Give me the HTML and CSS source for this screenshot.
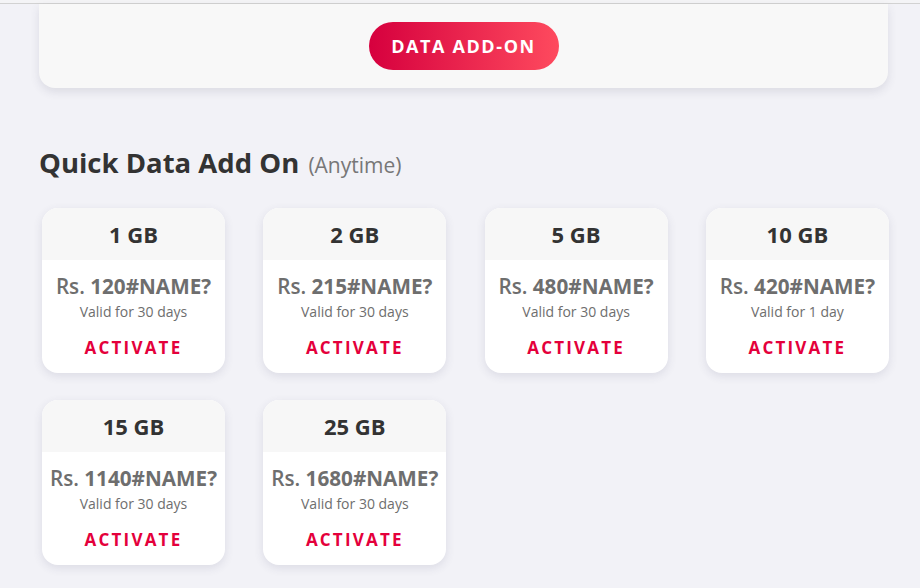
FILE: index.html
```html
<!DOCTYPE html>
<html>
<head>
<meta charset="utf-8">
<link rel="stylesheet" href="styles.css">
</head>
<body>
<div class="topline"></div>
<div class="page">
  <div class="hero">
    <button class="btn-grad">DATA ADD-ON</button>
  </div>
  <h2 class="title">Quick Data Add On <span class="sub">(Anytime)</span></h2>
  <div class="grid">
    <div class="card"><div class="card-head">1 GB</div><div class="card-body"><div class="price"><span class="rs">Rs.</span> 120#NAME?</div><div class="valid">Valid for 30 days</div><a class="act">ACTIVATE</a></div></div>
    <div class="card"><div class="card-head">2 GB</div><div class="card-body"><div class="price"><span class="rs">Rs.</span> 215#NAME?</div><div class="valid">Valid for 30 days</div><a class="act">ACTIVATE</a></div></div>
    <div class="card"><div class="card-head">5 GB</div><div class="card-body"><div class="price"><span class="rs">Rs.</span> 480#NAME?</div><div class="valid">Valid for 30 days</div><a class="act">ACTIVATE</a></div></div>
    <div class="card"><div class="card-head">10 GB</div><div class="card-body"><div class="price"><span class="rs">Rs.</span> 420#NAME?</div><div class="valid">Valid for 1 day</div><a class="act">ACTIVATE</a></div></div>
    <div class="card"><div class="card-head">15 GB</div><div class="card-body"><div class="price"><span class="rs">Rs.</span> 1140#NAME?</div><div class="valid">Valid for 30 days</div><a class="act">ACTIVATE</a></div></div>
    <div class="card"><div class="card-head">25 GB</div><div class="card-body"><div class="price"><span class="rs">Rs.</span> 1680#NAME?</div><div class="valid">Valid for 30 days</div><a class="act">ACTIVATE</a></div></div>
  </div>
</div>
</body>
</html>
```
FILE: styles.css
```css
* { box-sizing: border-box; }
html, body { margin: 0; padding: 0; }
body {
  background: #f2f2f7;
  font-family: "Open Sans", "Noto Sans", sans-serif;
  color: #333;
  height: 588px;
  overflow: hidden;
}
.topline {
  height: 4px;
  border-bottom: 1px solid #d2d2d2;
  background: #f4f4f6;
}
.page {
  padding: 0 32px 0 39px;
}
.hero {
  width: 849px;
  height: 84px;
  background: #f8f8f8;
  border-radius: 0 0 16px 16px;
  box-shadow: 0 4px 10px rgba(60, 60, 90, 0.12);
  display: flex;
  justify-content: center;
  padding-top: 18px;
}
.btn-grad {
  width: 190px;
  height: 48px;
  border: 0;
  border-radius: 24px;
  background: linear-gradient(90deg, #d6003e 0%, #fe4a5e 100%);
  color: #fff;
  font-family: "Open Sans", sans-serif;
  font-weight: 700;
  font-size: 18px;
  letter-spacing: 1.6px;
  padding: 0 0 0 0;
}
.title {
  margin: 57px 0 0 0;
  font-size: 27.5px;
  font-weight: 700;
  color: #333;
  line-height: 36px;
}
.sub {
  font-size: 21px;
  font-weight: 400;
  color: #777;
  margin-left: 2px;
}
.grid {
  margin-top: 25px;
  padding-left: 3px;
  display: grid;
  grid-template-columns: repeat(4, 183px);
  column-gap: 38.3px;
  row-gap: 27px;
}
.card {
  height: 165px;
  background: #fff;
  border-radius: 16px;
  overflow: hidden;
  box-shadow: 0 3px 10px rgba(60, 60, 100, 0.12);
  text-align: center;
}
.card-head {
  height: 52px;
  background: #f7f7f7;
  font-size: 22px;
  font-weight: 700;
  color: #333;
  line-height: 53px;
}
.card-body {
  display: flex;
  flex-direction: column;
  align-items: center;
}
.price {
  margin-top: 12px;
  font-size: 20.7px;
  font-weight: 700;
  color: #6e6e6e;
  line-height: 28px;
}
.rs { font-weight: 600; }
.valid {
  font-size: 14px;
  color: #6e6e6e;
  line-height: 18px;
  margin-top: 3px;
}
.act {
  margin-top: 16px;
  font-size: 17px;
  font-weight: 700;
  color: #e4003b;
  letter-spacing: 2.2px;
  line-height: 22px;
}
```
